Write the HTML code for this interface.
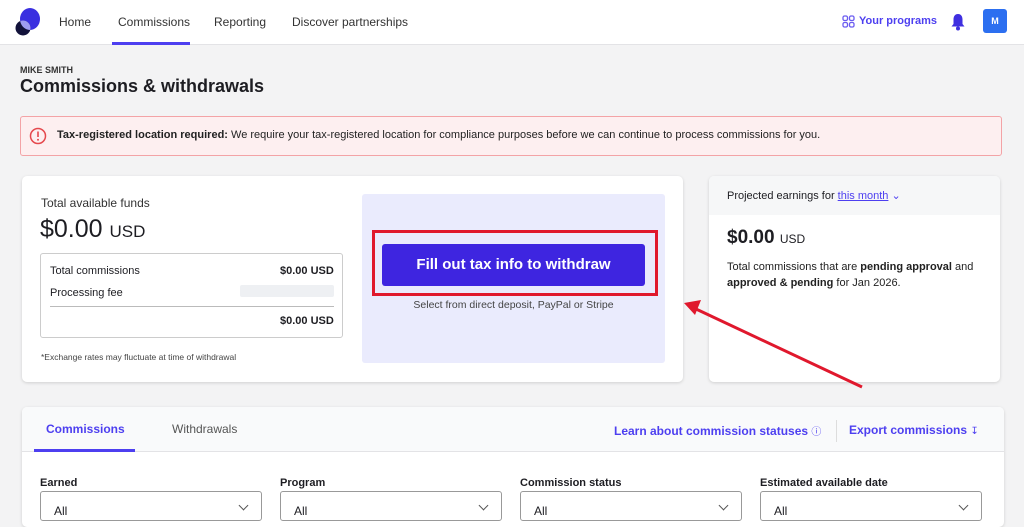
<!DOCTYPE html><html><head><style>
*{box-sizing:border-box;margin:0;padding:0}
body{width:1024px;height:516px;overflow:hidden;background:#f3f3f4;font-family:"Liberation Sans",sans-serif;color:#1d1d22;position:relative}
.a{position:absolute;white-space:nowrap}
.nav{position:absolute;left:0;top:0;width:1024px;height:45px;background:#fff;border-bottom:1px solid #e3e3e6}
.n{font-size:12px;color:#333;top:15px}
.card{position:absolute;background:#fff;border-radius:5px;box-shadow:0 1px 3px rgba(0,0,0,.15)}
.b{font-weight:bold}
.sel{position:absolute;top:491px;width:222px;height:30px;border:1px solid #999;border-radius:3px;background:#fff}
.sel span{position:absolute;left:13px;top:12px;font-size:12px}
.sel i{position:absolute;right:14px;top:10px;width:7px;height:7px;border-right:1px solid #555;border-bottom:1px solid #555;transform:rotate(45deg)}
.lab{font-size:11px;font-weight:bold;top:477px}
</style></head><body>
<div class="nav">
<svg class="a" style="left:13px;top:6px" width="28" height="30"><defs><clipPath id="c"><circle cx="10" cy="22" r="7.5"/></clipPath></defs><ellipse cx="17" cy="13" rx="10" ry="11" fill="#3a2fe0"/><circle cx="10" cy="22" r="7.5" fill="#12123a"/><ellipse cx="17" cy="13" rx="10" ry="11" fill="#9e9cf0" clip-path="url(#c)"/></svg>
<div class="a n" style="left:59px">Home</div>
<div class="a n" style="left:118px">Commissions</div>
<div class="a" style="left:112px;top:42px;width:78px;height:3px;background:#4d3ff0"></div>
<div class="a n" style="left:214px">Reporting</div>
<div class="a n" style="left:292px">Discover partnerships</div>
<svg class="a" style="left:842px;top:15px" width="13" height="13" fill="none" stroke="#6b5cf0" stroke-width="1.3"><rect x="1" y="1" width="4.5" height="4.5" rx="1.5"/><rect x="7.5" y="1" width="4.5" height="4.5" rx="1.5"/><rect x="1" y="7.5" width="4.5" height="4.5" rx="1.5"/><rect x="7.5" y="7.5" width="4.5" height="4.5" rx="1.5"/></svg>
<div class="a b" style="left:859px;top:15px;font-size:11px;color:#4d3ff0">Your programs</div>
<svg class="a" style="left:950px;top:13px" width="16" height="18"><path d="M8 1C4.5 1 3.5 4 3.5 6.5V11L1.5 13.5H14.5L12.5 11V6.5C12.5 4 11.5 1 8 1Z" fill="#3f2fe0"/><circle cx="8" cy="15.5" r="2" fill="#3f2fe0"/></svg>
<div class="a" style="left:983px;top:9px;width:24px;height:24px;background:#2c6ff0;border-radius:3px;color:#fff;font-size:9px;font-weight:bold;text-align:center;line-height:24px">M</div>
</div>
<div class="a b" style="left:20px;top:65px;font-size:9px;color:#333">MIKE SMITH</div>
<div class="a b" style="left:20px;top:76px;font-size:18px">Commissions &amp; withdrawals</div>
<div class="a" style="left:20px;top:116px;width:982px;height:40px;background:#fdeff0;border:1px solid #f3a3a6;border-radius:3px"></div>
<svg class="a" style="left:29px;top:127px" width="18" height="18"><circle cx="9" cy="9" r="7.5" fill="none" stroke="#e5484d" stroke-width="1.5"/><path d="M9 4.5V10" stroke="#e5484d" stroke-width="1.6"/><circle cx="9" cy="12.8" r="1" fill="#e5484d"/></svg>
<div class="a" style="left:57px;top:129px;font-size:11px;color:#222"><b>Tax-registered location required:</b> We require your tax-registered location for compliance purposes before we can continue to process commissions for you.</div>

<div class="card" style="left:22px;top:176px;width:661px;height:206px"></div>
<div class="a" style="left:41px;top:196px;font-size:12px;color:#333">Total available funds</div>
<div class="a" style="left:40px;top:215px;font-size:25px;font-weight:500">$0.00 <span style="font-size:17px">USD</span></div>
<div class="a" style="left:40px;top:253px;width:303px;height:85px;border:1px solid #ccc;border-radius:3px;background:#fff"></div>
<div class="a" style="left:50px;top:265px;font-size:11px">Total commissions</div>
<div class="a b" style="left:280px;top:265px;font-size:11px">$0.00 USD</div>
<div class="a" style="left:50px;top:287px;font-size:11px">Processing fee</div>
<div class="a" style="left:240px;top:285px;width:94px;height:12px;background:#eef0f3;border-radius:2px"></div>
<div class="a" style="left:50px;top:306px;width:284px;height:1px;background:#bbb"></div>
<div class="a b" style="left:280px;top:315px;font-size:11px">$0.00 USD</div>
<div class="a" style="left:41px;top:352px;font-size:8.5px;color:#444">*Exchange rates may fluctuate at time of withdrawal</div>
<div class="a" style="left:362px;top:194px;width:303px;height:169px;background:#eaebfd;border-radius:3px"></div>
<div class="a" style="left:372px;top:230px;width:286px;height:66px;border:3px solid #e0182d"></div>
<div class="a b" style="left:382px;top:244px;width:263px;height:42px;background:#3e25e0;border-radius:3px;color:#fff;font-size:15px;text-align:center;line-height:42px">Fill out tax info to withdraw</div>
<div class="a" style="left:362px;top:299px;width:303px;text-align:center;font-size:10.5px;color:#444">Select from direct deposit, PayPal or Stripe</div>

<div class="card" style="left:709px;top:176px;width:291px;height:206px;overflow:hidden"><div style="height:39px;background:#f6f7f8"></div></div>
<div class="a" style="left:727px;top:189px;font-size:11px">Projected earnings for <span style="color:#4d3ff0;text-decoration:underline">this month</span> <span style="color:#4d3ff0">&#8964;</span></div>
<div class="a b" style="left:727px;top:227px;font-size:19px">$0.00 <span style="font-size:12px;font-weight:normal">USD</span></div>
<div class="a" style="left:727px;top:259px;font-size:11px;line-height:16px;color:#222">Total commissions that are <b>pending approval</b> and<br><b>approved &amp; pending</b> for Jan 2026.</div>

<svg class="a" style="left:0;top:0" width="1024" height="516"><line x1="862" y1="387" x2="696" y2="309" stroke="#e0182d" stroke-width="3"/><path d="M684 303L701 300L695 315Z" fill="#e0182d"/></svg>

<div class="card" style="left:22px;top:407px;width:982px;height:120px;overflow:hidden"><div style="height:45px;background:#f9fafb;border-bottom:1px solid #e3e3e6"></div></div>
<div class="a b" style="left:46px;top:422px;font-size:12px;color:#4d3ff0">Commissions</div>
<div class="a" style="left:34px;top:449px;width:101px;height:3px;background:#4d3ff0"></div>
<div class="a" style="left:172px;top:422px;font-size:12px;color:#555">Withdrawals</div>
<div class="a b" style="left:614px;top:423px;font-size:12px;color:#4d3ff0">Learn about commission statuses <span style="font-weight:normal;font-size:10px">&#9432;</span></div>
<div class="a" style="left:836px;top:420px;width:1px;height:22px;background:#ddd"></div>
<div class="a b" style="left:849px;top:423px;font-size:12px;color:#4d3ff0">Export commissions <span style="font-weight:normal;font-size:10px">&#8615;</span></div>
<div class="a lab" style="left:40px">Earned</div>
<div class="a lab" style="left:280px">Program</div>
<div class="a lab" style="left:520px">Commission status</div>
<div class="a lab" style="left:760px">Estimated available date</div>
<div class="sel" style="left:40px"><span>All</span><i></i></div>
<div class="sel" style="left:280px"><span>All</span><i></i></div>
<div class="sel" style="left:520px"><span>All</span><i></i></div>
<div class="sel" style="left:760px"><span>All</span><i></i></div>
</body></html>
